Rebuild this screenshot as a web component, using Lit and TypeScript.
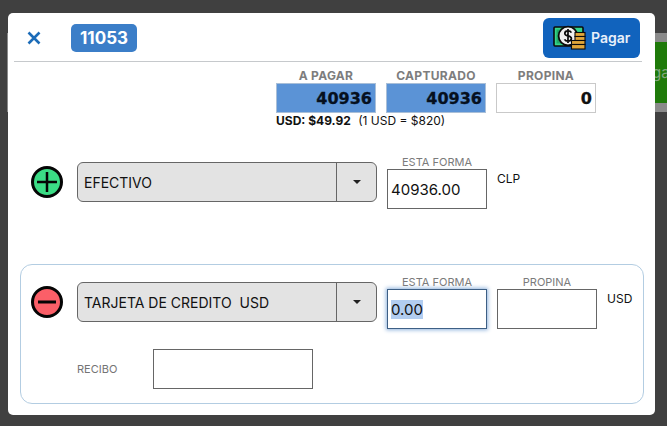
import { LitElement, css, html } from "lit";
import { customElement } from "lit/decorators.js";

const moneyIcon = html`
  <svg class="money" viewBox="0 0 34 26" width="34" height="26" aria-hidden="true">
    <rect x="1" y="2" width="29" height="19" rx="1" fill="#35d58a" stroke="#0b0b0b" stroke-width="1.6" />
    <rect x="3.5" y="4.5" width="5" height="14" fill="#1fa866" />
    <circle cx="15" cy="11" r="9.4" fill="#f1f1f1" stroke="#0b0b0b" stroke-width="1.8" />
    <path d="M18.4 7.6c-.6-1.1-2-1.7-3.4-1.7-1.8 0-3.2 1-3.2 2.5 0 3.3 6.6 1.7 6.6 5.1 0 1.5-1.5 2.6-3.4 2.6-1.5 0-2.9-.7-3.5-1.8M15 4v14" fill="none" stroke="#0b0b0b" stroke-width="1.7" />
    <g fill="#e0a63a" stroke="#0b0b0b" stroke-width="1.1">
      <rect x="22" y="7.5" width="10" height="4" />
      <rect x="22" y="11.5" width="10" height="4" />
      <rect x="18.5" y="15.5" width="13.5" height="4" />
      <rect x="18.5" y="19.5" width="13.5" height="4.5" />
    </g>
  </svg>
`;

const closeIcon = html`
  <svg viewBox="0 0 14 14" width="14" height="14" aria-hidden="true">
    <path d="M1.5 1.5l11 11M12.5 1.5l-11 11" stroke="#1c6cb8" stroke-width="2.6" fill="none" />
  </svg>
`;

function roundIcon(fill: string, plus: boolean) {
  return html`
    <svg class="round" viewBox="0 0 32 32" width="32" height="32" aria-hidden="true">
      <circle cx="16" cy="16" r="14.5" fill=${fill} stroke="#050505" stroke-width="3" />
      <path d=${plus ? "M6 16h20M16 6v20" : "M7 16h18"} stroke="#050505" stroke-width=${plus ? 2.5 : 3} fill="none" />
    </svg>
  `;
}

@customElement("app-root")
export class AppRoot extends LitElement {
  static styles = css`
    :host {
      display: block;
      position: relative;
      height: 426px;
      overflow: hidden;
      background: #404040;
      font-family: Inter, "Liberation Sans", sans-serif;
      color: #111;
    }

    * {
      box-sizing: border-box;
    }

    .behind {
      display: flex;
      justify-content: flex-end;
      height: 79px;
      margin: 33px 0 0 7px;
      padding: 9px 0;
      background: #8a8a8a;
    }

    .behind__button {
      width: 120px;
      padding-left: 87px;
      background: #1f7a0a;
      color: #83a67d;
      font-size: 15px;
      line-height: 61px;
      white-space: nowrap;
      overflow: hidden;
    }

    .modal {
      position: absolute;
      left: 8px;
      top: 13px;
      width: 647px;
      height: 402px;
      background: #fff;
      border-radius: 5px;
    }

    .header {
      display: flex;
      align-items: center;
      height: 49px;
      margin: 0 13px 0 6px;
      border-bottom: 1px solid #c6c9cc;
    }

    .close {
      display: flex;
      margin: 1px 0 0 13px;
    }

    .badge {
      width: 66px;
      height: 28px;
      margin: 2px 0 0 30px;
      border-radius: 5px;
      background: #3b7ec8;
      color: #fff;
      font-size: 17px;
      font-weight: 700;
      line-height: 28px;
      text-align: center;
    }

    .pay {
      display: flex;
      align-items: center;
      gap: 4px;
      width: 97px;
      height: 40px;
      margin: 1px 2px 0 auto;
      padding-left: 10px;
      border-radius: 6px;
      background: #1163bd;
      color: #e8f0fa;
      font-size: 14px;
      font-weight: 600;
    }

    .money {
      flex: none;
    }

    .totals {
      display: flex;
      gap: 10px;
      margin: 6px 0 0 268px;
    }

    .total {
      width: 100px;
    }

    .total__label {
      color: #7d7d7d;
      font-size: 12px;
      font-weight: 700;
      letter-spacing: 0.3px;
      line-height: 15px;
      text-align: center;
    }

    .total__value {
      height: 30px;
      padding-right: 3px;
      border: 1px solid #c9c9c9;
      font-family: "DejaVu Sans", sans-serif;
      font-size: 16px;
      font-weight: 700;
      line-height: 29px;
      text-align: right;
      -webkit-text-stroke: 0.3px currentColor;
    }

    .total__value--filled {
      background: #5b93d6;
      border-color: #a9bfd8;
      color: #06101e;
    }

    .rate {
      margin: 1px 0 0 268px;
      font-size: 12px;
      line-height: 14px;
    }

    .rate b {
      margin-right: 4px;
    }

    .line {
      display: flex;
      align-items: flex-start;
    }

    .line--cash {
      margin: 34px 0 0 23px;
    }

    .card {
      height: 140px;
      margin: 55px 11px 0 12px;
      padding: 17px 0 0 10px;
      border: 1px solid #b3cde2;
      border-radius: 12px;
    }

    .round {
      flex: none;
      margin: 4px 14px 0 0;
    }

    .select {
      display: flex;
      flex: none;
      width: 300px;
      height: 40px;
      border: 1px solid #666;
      border-radius: 6px;
      background: #e3e3e3;
      font-size: 14px;
    }

    .select__text {
      flex: 1;
      padding-left: 6px;
      line-height: 40px;
      white-space: pre;
    }

    .select__arrow {
      display: flex;
      align-items: center;
      justify-content: center;
      width: 40px;
      border-left: 1px solid #666;
    }

    .select__arrow::after {
      content: "";
      border: 4px solid transparent;
      border-top: 4px solid #222;
      border-bottom: 0;
    }

    .field {
      flex: none;
      width: 100px;
      margin-left: 10px;
    }

    .field__label {
      display: block;
      height: 14px;
      margin-top: -7px;
      color: #7b7b7b;
      font-size: 11px;
      line-height: 14px;
      text-align: center;
    }

    input {
      display: block;
      width: 100%;
      height: 40px;
      padding: 0 3px;
      border: 1px solid #666;
      border-radius: 0;
      outline: none;
      background: #fff;
      color: #111;
      font-family: inherit;
      font-size: 15px;
    }

    input::selection {
      background: #b2cdf0;
      color: #111;
    }

    .focused {
      border-color: #3d5f85;
      box-shadow: 0 0 4px 1px #8fb2dc;
    }

    .unit {
      margin: 10px 0 0 10px;
      font-size: 12px;
      line-height: 14px;
    }

    .receipt {
      display: flex;
      align-items: center;
      margin: 20px 0 0 46px;
    }

    .receipt__label {
      width: 76px;
      color: #747474;
      font-size: 11px;
    }

    .receipt input {
      width: 160px;
    }
  `;

  firstUpdated() {
    const input = this.renderRoot.querySelector<HTMLInputElement>("input.focused");
    input?.focus();
    input?.select();
  }

  render() {
    return html`
      <div class="behind"><div class="behind__button">Pagar</div></div>
      <div class="modal">
        <div class="header">
          <span class="close">${closeIcon}</span>
          <span class="badge">11053</span>
          <div class="pay">${moneyIcon}<span>Pagar</span></div>
        </div>

        <div class="totals">
          <div class="total">
            <div class="total__label">A PAGAR</div>
            <div class="total__value total__value--filled">40936</div>
          </div>
          <div class="total">
            <div class="total__label">CAPTURADO</div>
            <div class="total__value total__value--filled">40936</div>
          </div>
          <div class="total">
            <div class="total__label">PROPINA</div>
            <div class="total__value">0</div>
          </div>
        </div>
        <div class="rate"><b>USD: $49.92</b> (1 USD = $820)</div>

        <div class="line line--cash">
          ${roundIcon("#3bdc85", true)}
          <div class="select">
            <span class="select__text">EFECTIVO</span>
            <span class="select__arrow"></span>
          </div>
          <div class="field">
            <span class="field__label">ESTA FORMA</span>
            <input .value=${"40936.00"} />
          </div>
          <span class="unit">CLP</span>
        </div>

        <div class="card">
          <div class="line">
            ${roundIcon("#fb5f68", false)}
            <div class="select">
              <span class="select__text">TARJETA DE CREDITO  USD</span>
              <span class="select__arrow"></span>
            </div>
            <div class="field">
              <span class="field__label">ESTA FORMA</span>
              <input class="focused" .value=${"0.00"} />
            </div>
            <div class="field">
              <span class="field__label">PROPINA</span>
              <input />
            </div>
            <span class="unit">USD</span>
          </div>
          <div class="receipt">
            <span class="receipt__label">RECIBO</span>
            <input />
          </div>
        </div>
      </div>
    `;
  }
}
